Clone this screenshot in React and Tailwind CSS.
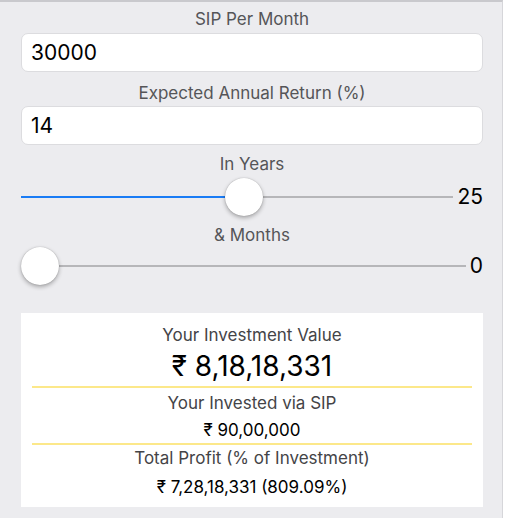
const Slider = ({ fill, thumbLeft, value }) => {
  return (
    <div className="flex items-center h-[40px]">
      <div className="relative flex-1 h-[40px]">
        <div className="absolute left-0 right-0 top-[19px] h-[2px] bg-[#b6b6b9]" />
        <div
          className="absolute left-0 top-[19px] h-[2px] bg-[#1a7cf5]"
          style={{ width: fill }}
        />
        <div
          className="absolute top-[1px] w-[38px] h-[38px] rounded-full bg-white shadow-[0_2px_4px_rgba(0,0,0,0.3),0_0_1px_rgba(0,0,0,0.3)]"
          style={{ left: thumbLeft }}
        />
      </div>
      <span className="text-[21px] text-black ml-[4px]">{value}</span>
    </div>
  );
};

export default function App() {
  return (
    <div
      className="w-[503px] h-[518px] bg-[#ececef] border-t-2 border-[#c9c9cd] border-r border-r-[#d6d6da] overflow-hidden"
      style={{ fontFamily: "Inter, 'Noto Sans', 'DejaVu Sans', sans-serif" }}
    >
      <div className="px-[21px] pr-[19px] flex flex-col">
        <div className="text-center text-[17px] text-[#555558] leading-[20px] mt-[7px] mb-[4px]">
          SIP Per Month
        </div>
        <div className="h-[39px] bg-white border border-[#dcdcdf] rounded-[7px] flex items-center px-[9px] text-[21px] text-black">
          30000
        </div>
        <div className="text-center text-[17px] text-[#555558] leading-[20px] mt-[11px] mb-[3px]">
          Expected Annual Return (%)
        </div>
        <div className="h-[39px] bg-white border border-[#dcdcdf] rounded-[7px] flex items-center px-[9px] text-[21px] text-black">
          14
        </div>
        <div className="text-center text-[17px] text-[#555558] leading-[20px] mt-[9px] mb-[3px]">
          In Years
        </div>
        <Slider fill="204px" thumbLeft="204px" value="25" />
        <div className="text-center text-[17px] text-[#555558] leading-[20px] mt-[8px] mb-[1px]">
          &amp; Months
        </div>
        <Slider fill="0px" thumbLeft="0px" value="0" />
        <div className="mt-[27px] bg-white h-[194px] flex flex-col items-center px-[11px]">
          <div className="text-[17px] text-[#444447] leading-[20px] mt-[12px]">
            Your Investment Value
          </div>
          <div className="text-[28px] text-black leading-[32px] mt-[5px]">
            ₹ 8,18,18,331
          </div>
          <div className="w-full h-[2px] bg-[#fce88a] mt-[4px]" />
          <div className="text-[17px] text-[#444447] leading-[20px] mt-[5px]">
            Your Invested via SIP
          </div>
          <div className="text-[17px] text-black leading-[20px] mt-[7px]">
            ₹ 90,00,000
          </div>
          <div className="w-full h-[2px] bg-[#fce88a] mt-[3px]" />
          <div className="text-[17px] text-[#444447] leading-[20px] mt-[3px]">
            Total Profit (% of Investment)
          </div>
          <div className="text-[17px] text-black leading-[20px] mt-[9px]">
            ₹ 7,28,18,331 (809.09%)
          </div>
        </div>
      </div>
    </div>
  );
}
